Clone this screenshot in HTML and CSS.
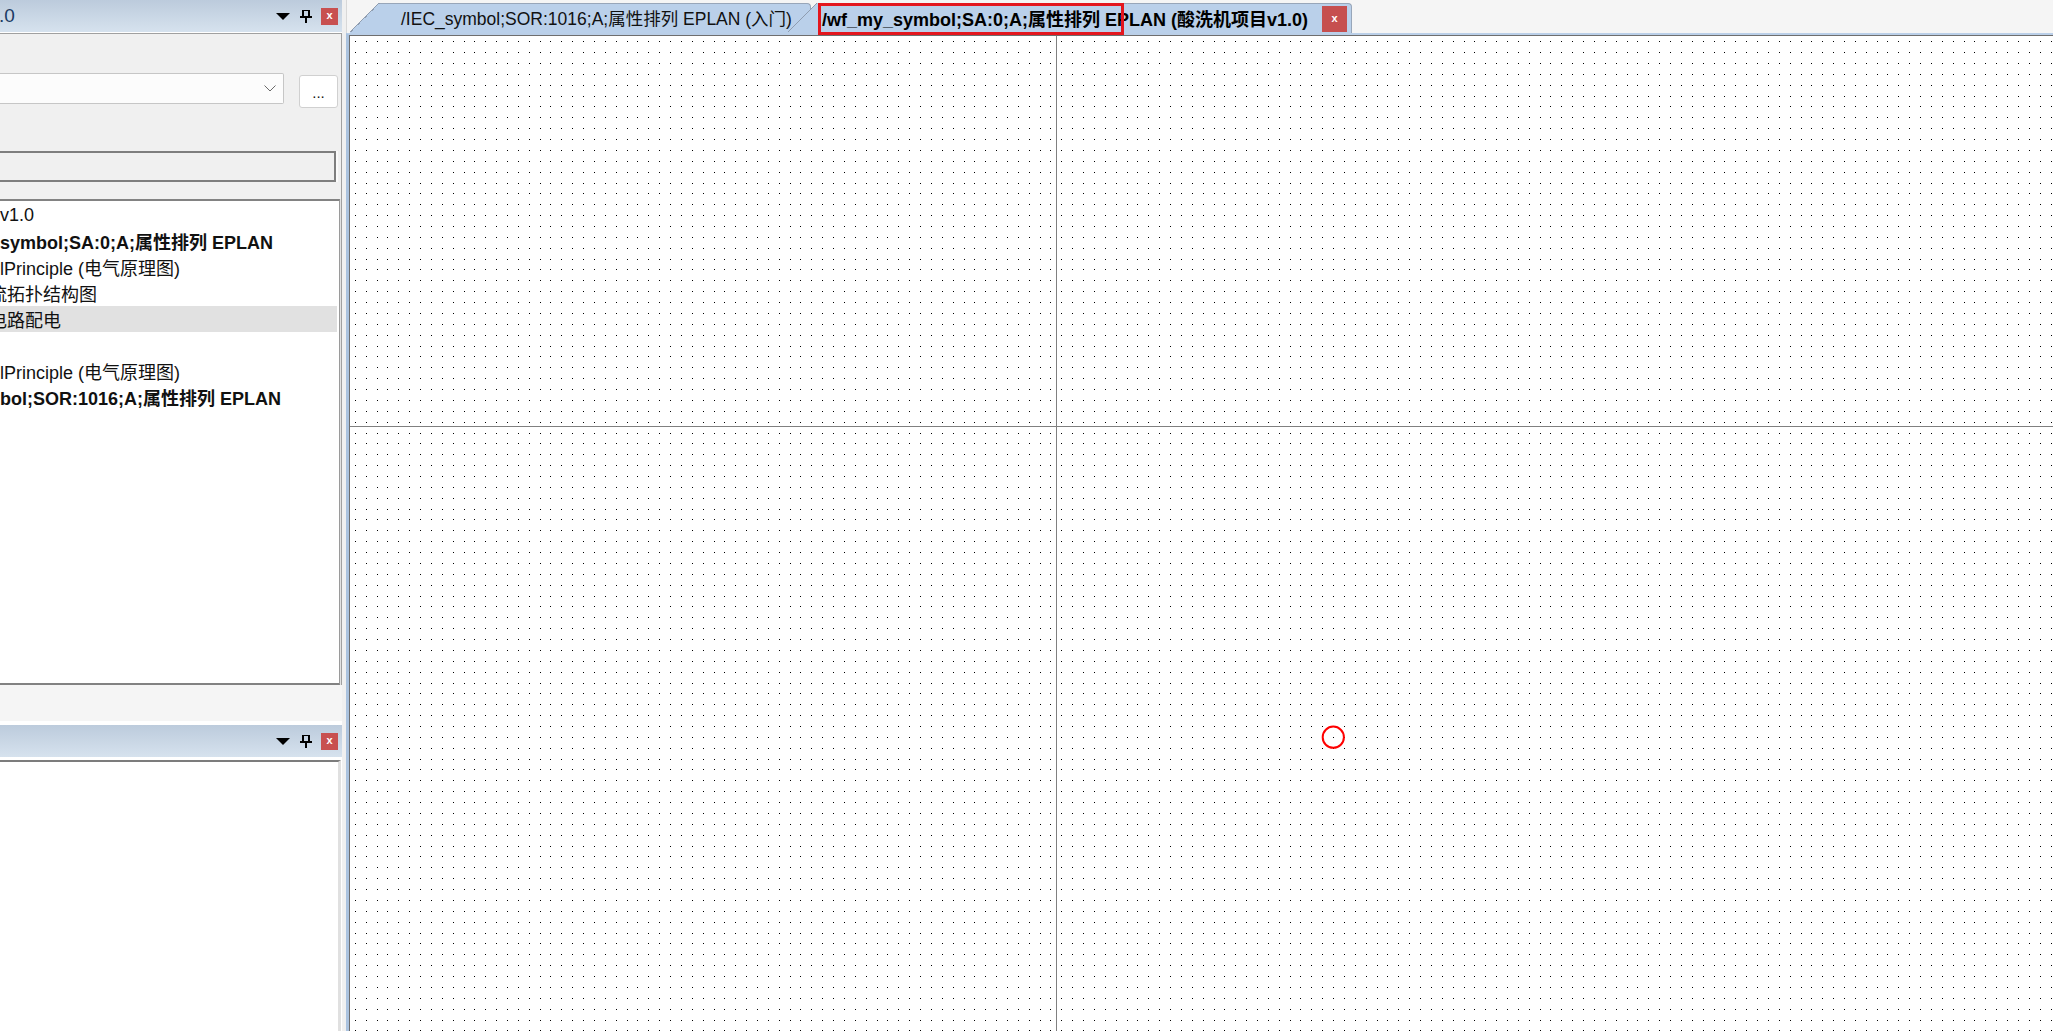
FILE: index.html
```html
<!DOCTYPE html>
<html lang="zh-CN">
<head>
<meta charset="utf-8">
<title>EPLAN</title>
<link rel="stylesheet" href="styles.css">
</head>
<body>
<div class="app">
  <aside class="left">
    <section class="pane-top">
      <header class="pane-title">
        <span class="title-text">.0</span>
        <span class="title-tools">
          <svg class="ico-tri" width="14" height="8" viewBox="0 0 14 8"><path d="M0 0H14L7 7Z" fill="#000"/></svg>
          <svg class="ico-pin" width="12" height="13" viewBox="0 0 12 13"><rect x="2" y="0" width="2" height="7" fill="#000"/><rect x="4" y="0" width="4" height="1" fill="#000"/><rect x="8" y="0" width="2" height="7" fill="#000"/><rect x="0" y="6" width="12" height="2" fill="#000"/><rect x="5" y="8" width="2" height="5" fill="#000"/></svg>
          <span class="pane-close">x</span>
        </span>
      </header>
      <div class="pane-body">
        <div class="combo-row">
          <div class="combo">
            <svg class="chev" width="12" height="7" viewBox="0 0 12 7"><polyline points="0.5,0.5 6,6 11.5,0.5" fill="none" stroke="#6a6a6a" stroke-width="1"/></svg>
          </div>
          <div class="more-btn">...</div>
        </div>
        <div class="textfield"></div>
        <div class="tree">
          <div class="tree-row"><span>v1.0</span></div>
          <div class="tree-row bold"><span>symbol;SA:0;A;属性排列 EPLAN</span></div>
          <div class="tree-row"><span>lPrinciple (电气原理图)</span></div>
          <div class="tree-row"><span class="clip">流拓扑结构图</span></div>
          <div class="tree-row sel"><span class="clip">电路配电</span></div>
          <div class="tree-row"><span></span></div>
          <div class="tree-row"><span>lPrinciple (电气原理图)</span></div>
          <div class="tree-row bold"><span>bol;SOR:1016;A;属性排列 EPLAN</span></div>
        </div>
      </div>
      <div class="pane-foot"></div>
    </section>
    <section class="pane-bottom">
      <header class="pane-title">
        <span class="title-text"></span>
        <span class="title-tools">
          <svg class="ico-tri" width="14" height="8" viewBox="0 0 14 8"><path d="M0 0H14L7 7Z" fill="#000"/></svg>
          <svg class="ico-pin" width="12" height="13" viewBox="0 0 12 13"><rect x="2" y="0" width="2" height="7" fill="#000"/><rect x="4" y="0" width="4" height="1" fill="#000"/><rect x="8" y="0" width="2" height="7" fill="#000"/><rect x="0" y="6" width="12" height="2" fill="#000"/><rect x="5" y="8" width="2" height="5" fill="#000"/></svg>
          <span class="pane-close">x</span>
        </span>
      </header>
      <div class="pane2-body"></div>
    </section>
  </aside>
  <div class="splitter"></div>
  <main class="doc">
    <div class="tabstrip">
      <div class="tab tab-1">
        <span class="tab-slant"></span>
        <span class="tab-body">/IEC_symbol;SOR:1016;A;属性排列 EPLAN (入门)</span>
      </div>
      <div class="tab tab-2">
        <span class="tab-slant"></span>
        <span class="tab-body">
          <span class="tab-label">/wf_my_symbol;SA:0;A;属性排列 EPLAN (酸洗机项目v1.0)</span>
          <span class="tab-close">x</span>
          <span class="highlight"></span>
        </span>
      </div>
    </div>
    <div class="doc-body">
      <div class="canvas">
        <svg id="sheet" class="sheet" xmlns="http://www.w3.org/2000/svg">
          <path id="dots" fill="#000" shape-rendering="crispEdges" d=""/>
          <line x1="0" y1="390.5" x2="1703" y2="390.5" stroke="#808080" stroke-width="1"/>
          <line x1="706.5" y1="0" x2="706.5" y2="995" stroke="#808080" stroke-width="1"/>
          <circle cx="983.3" cy="701.2" r="10.6" fill="none" stroke="#ff0000" stroke-width="2"/>
        </svg>
      </div>
    </div>
  </main>
</div>
<script src="script.js"></script>
</body>
</html>
```

FILE: styles.css
```css
* { box-sizing: border-box; }
html, body { margin: 0; padding: 0; }
body {
  width: 2053px;
  height: 1031px;
  overflow: hidden;
  background: #fff;
  font-family: "Liberation Sans", "Noto Sans CJK SC", sans-serif;
  color: #111;
}
.app { display: flex; width: 2053px; height: 1031px; }

/* ---------- left dock ---------- */
.left { width: 342px; flex: none; display: flex; flex-direction: column; background: #fff; }
.pane-top { height: 725px; flex: none; display: flex; flex-direction: column; }
.pane-title {
  height: 32px; flex: none;
  display: flex; align-items: center; justify-content: space-between;
  background: linear-gradient(to bottom, #bccbdc, #d6e2ee);
  padding-right: 4px;
  overflow: hidden;
}
.title-text { font-size: 19px; color: #1c3b63; margin-left: -1px; white-space: nowrap; }
.title-tools { display: flex; align-items: center; }
.ico-tri { display: block; margin-top: 2px; }
.ico-pin { display: block; margin-left: 10px; }
.pane-close {
  width: 17px; height: 17px; margin-left: 9px;
  background: #c85050; color: #fff;
  font-size: 11px; font-weight: bold; line-height: 15px; text-align: center;
}

.pane-body {
  height: 652px; flex: none;
  margin-top: 1px;
  border-top: 1px solid #a0a0a0;
  border-right: 1px solid #a0a0a0;
  background: #f0f0f0;
  padding-top: 39px;
  display: flex; flex-direction: column;
}
.combo-row { display: flex; align-items: flex-start; height: 35px; flex: none; }
.combo {
  width: 284px; height: 31px;
  background: #fcfcfc;
  border: 1px solid #c6c6c6; border-left: none;
  border-radius: 0 2px 2px 0;
  display: flex; align-items: center; justify-content: flex-end;
  padding-right: 7px;
}
.chev { display: block; }
.more-btn {
  width: 39px; height: 33px; margin-left: 15px; margin-top: 2px;
  background: #fff; border: 1px solid #d0d0d0; border-radius: 3px;
  font-size: 15px; line-height: 33px; text-align: center; color: #111;
}
.textfield {
  width: 336px; height: 31px; flex: none;
  margin-top: 43px;
  background: #f0f0f0;
  border: 2px solid #7e7e7e; border-left: none;
  box-shadow: 2px 0 0 #fafafa;
}
.tree {
  width: 340px; flex: 1;
  margin-top: 17px;
  background: #fff;
  border-top: 2px solid #828282;
  border-bottom: 2px solid #828282;
  border-right: 1px solid #9a9a9a;
  box-shadow: 1px 0 0 #e2e2e2;
  padding-top: 1px;
  overflow: hidden;
}
.tree-row {
  height: 26px; display: flex; align-items: center;
  font-size: 18px; white-space: nowrap; color: #111;
}
.tree-row.bold { font-weight: bold; }
.tree-row.sel { background: #e1e1e1; width: 337px; }
.tree-row .clip { margin-left: -11px; }

.pane-foot { height: 36px; flex: none; background: #f5f5f5; margin-bottom: 4px; }

.pane-bottom { flex: 1; display: flex; flex-direction: column; }
.pane2-body {
  flex: 1;
  margin-top: 3px;
  margin-right: 1px;
  background: #fff;
  border-top: 2px solid #7c7c7c;
  border-right: 3px solid #e0e0e0;
}

.splitter { width: 4px; flex: none; background: #f0f0f0; }

/* ---------- document area ---------- */
.doc { flex: 1; display: flex; flex-direction: column; min-width: 0; }
.tabstrip {
  height: 33px; flex: none;
  background: #f5f5f5;
  border-left: 1px solid #d8d8d8;
  padding-left: 3px;
  display: flex; align-items: flex-end;
}
.tab { display: flex; height: 30px; flex: none; }
.tab-slant {
  width: 30px; flex: none;
  background: linear-gradient(to bottom right, transparent calc(50% - 1px), #8f9db0 calc(50% - 1px), #8f9db0 50%, #bad0ea 50%);
}
.tab-body {
  display: flex; align-items: center;
  background: #bad0ea;
  border-top: 1px solid #98a6b9;
  border-right: 1px solid #98a6b9;
  border-top-right-radius: 4px;
  font-size: 17.5px; white-space: nowrap; color: #111;
  padding-bottom: 2px;
}
.tab-1 .tab-body { padding-left: 21px; padding-right: 18px; }
.tab-2 { margin-left: -23px; }
.tab-2 .tab-body { position: relative; padding-left: 4px; padding-right: 4px; }
.tab-label { font-weight: bold; color: #000; font-size: 18px; }
.tab-close {
  width: 25px; height: 26px; margin-left: 14px; margin-top: 2px;
  background: #c64f4f; color: #fff;
  font-size: 11px; font-weight: bold; line-height: 25px; text-align: center;
}
.highlight {
  position: absolute; left: 0; top: -1px;
  width: 306px; height: 32px;
  border: 3px solid #e3161e;
}

.doc-body {
  flex: 1; display: flex; min-height: 0;
  border-left: 3px solid #aac2de;
  border-top: 2px solid #bacfe8;
}
.canvas {
  flex: 1; overflow: hidden;
  background: #fff;
  border-top: 1px solid #6e6e6e;
  border-left: 1px solid #6e6e6e;
}
.sheet { display: block; width: 100%; height: 100%; }
```

FILE: script.js
```js
(function () {
  var svg = document.getElementById('sheet');
  var path = document.getElementById('dots');
  var r = svg.getBoundingClientRect();
  var ox = r.left, oy = r.top, W = r.width, H = r.height;
  var step = 10.87;
  var d = [];
  for (var j = -2; ; j++) {
    var y = Math.round(41.2 + j * step) - oy;
    if (y >= H) break;
    if (y < 0) continue;
    for (var i = -2; ; i++) {
      var x = Math.round(354.8 + i * step) - ox;
      if (x >= W) break;
      if (x < 0) continue;
      d.push('M' + x + ' ' + y + 'h1v1h-1z');
    }
  }
  path.setAttribute('d', d.join(''));
})();
```
